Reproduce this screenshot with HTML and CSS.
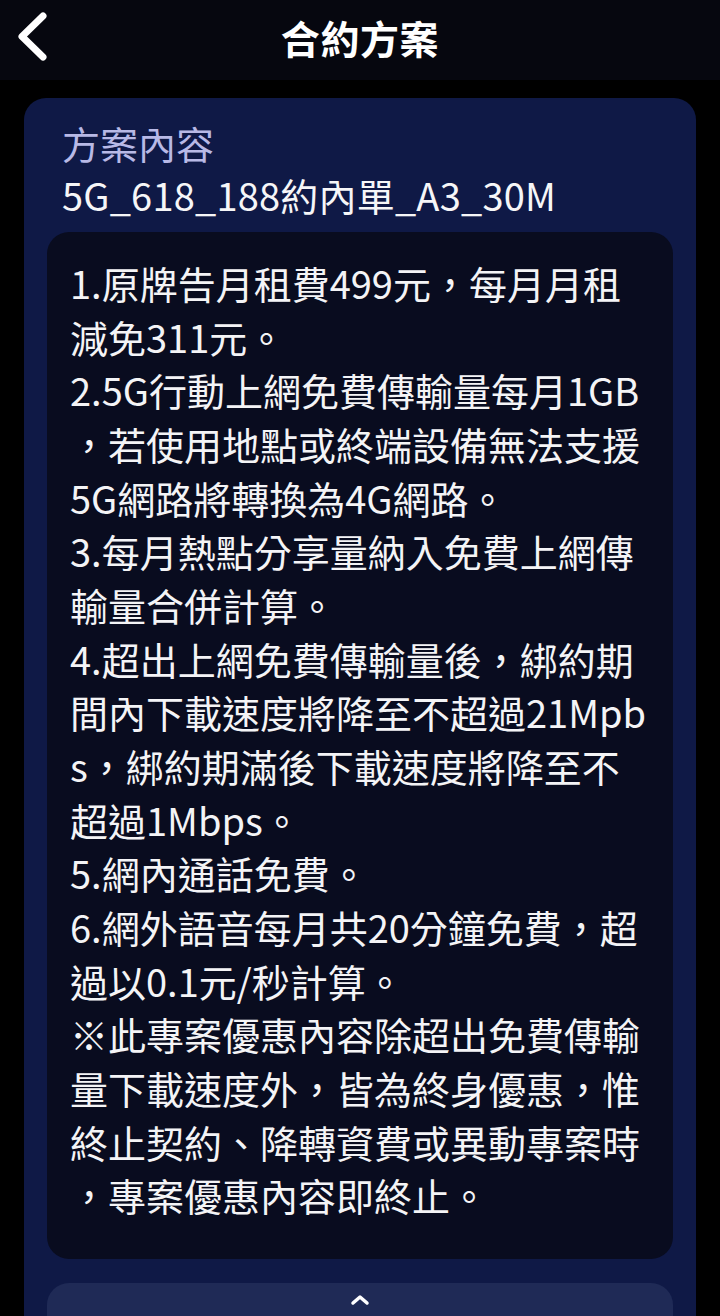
FILE: index.html
```html
<!DOCTYPE html>
<html lang="zh-Hant">
<head>
<meta charset="utf-8">
<title>合約方案</title>
<link rel="stylesheet" href="styles.css">
</head>
<body>
<header class="topbar">
  <button class="back" aria-label="返回">
    <svg width="56" height="72" viewBox="0 0 56 72"><path d="M43 16 L22 36.5 L43 57" fill="none" stroke="#fff" stroke-width="7" stroke-linecap="round" stroke-linejoin="round"/></svg>
  </button>
  <h1 class="title">合約方案</h1>
  <span class="spacer"></span>
</header>
<main class="page">
  <section class="card">
    <h2 class="card-label">方案內容</h2>
    <div class="card-name">5G_618_188約內單_A3_30M</div>
    <div class="detail">
      <p>1.原牌告月租費499元，每月月租減免311元。</p>
      <p>2.5G行動上網免費傳輸量每月1GB，若使用地點或終端設備無法支援5G網路將轉換為4G網路。</p>
      <p>3.每月熱點分享量納入免費上網傳輸量合併計算。</p>
      <p>4.超出上網免費傳輸量後，綁約期間內下載速度將降至不超過21Mpbs，綁約期滿後下載速度將降至不超過1Mbps。</p>
      <p>5.網內通話免費。</p>
      <p>6.網外語音每月共20分鐘免費，超過以0.1元/秒計算。</p>
      <p>※此專案優惠內容除超出免費傳輸量下載速度外，皆為終身優惠，惟終止契約、降轉資費或異動專案時，專案優惠內容即終止。</p>
    </div>
    <button class="collapse" aria-label="收合">
      <svg width="20" height="12" viewBox="0 0 20 12"><path d="M3 9 L10 3 L17 9" fill="none" stroke="#fff" stroke-width="3.5" stroke-linecap="round" stroke-linejoin="round"/></svg>
    </button>
  </section>
</main>
</body>
</html>
```
FILE: styles.css
```css
* { box-sizing: border-box; }
html, body {
  margin: 0;
  padding: 0;
  background: #000;
  height: 1316px;
  overflow: hidden;
}
body {
  font-family: "Noto Sans CJK TC", "Noto Sans", sans-serif;
  color: #f4f4f6;
}
.topbar {
  height: 80px;
  background: #06070f;
  display: grid;
  grid-template-columns: 1fr auto 1fr;
  align-items: start;
}
.back {
  justify-self: start;
  background: none;
  border: 0;
  padding: 0;
  margin: 0;
  height: 72px;
  display: block;
}
.back svg { display: block; }
.title {
  margin: 0;
  font-size: 39px;
  font-weight: 700;
  color: #fff;
  line-height: 74px;
  letter-spacing: 0.6px;
}
.page {
  padding: 18px 24px 0;
}
.card {
  background: #0f1946;
  border-radius: 22px;
  padding: 19px 23px 0;
}
.card-label {
  margin: 0;
  padding-left: 15px;
  font-size: 38px;
  font-weight: 400;
  line-height: 52px;
  color: #b8b9e6;
}
.card-name {
  padding-left: 15px;
  font-size: 38px;
  line-height: 52px;
  color: #f6f6f8;
  letter-spacing: 0.2px;
}
.detail {
  margin-top: 11px;
  background: #090c1f;
  border-radius: 22px;
  padding: 24px 23px 37px;
  font-size: 38px;
  line-height: 53.65px;
  word-break: break-all;
  line-break: anywhere;
}
.detail p {
  margin: 0;
  width: 580px;
}
.collapse {
  display: flex;
  justify-content: center;
  align-items: flex-start;
  width: 100%;
  height: 60px;
  margin-top: 24px;
  padding: 11px 0 0;
  border: 0;
  border-radius: 22px;
  background: #1f2a56;
}
.collapse svg { display: block; }
```
